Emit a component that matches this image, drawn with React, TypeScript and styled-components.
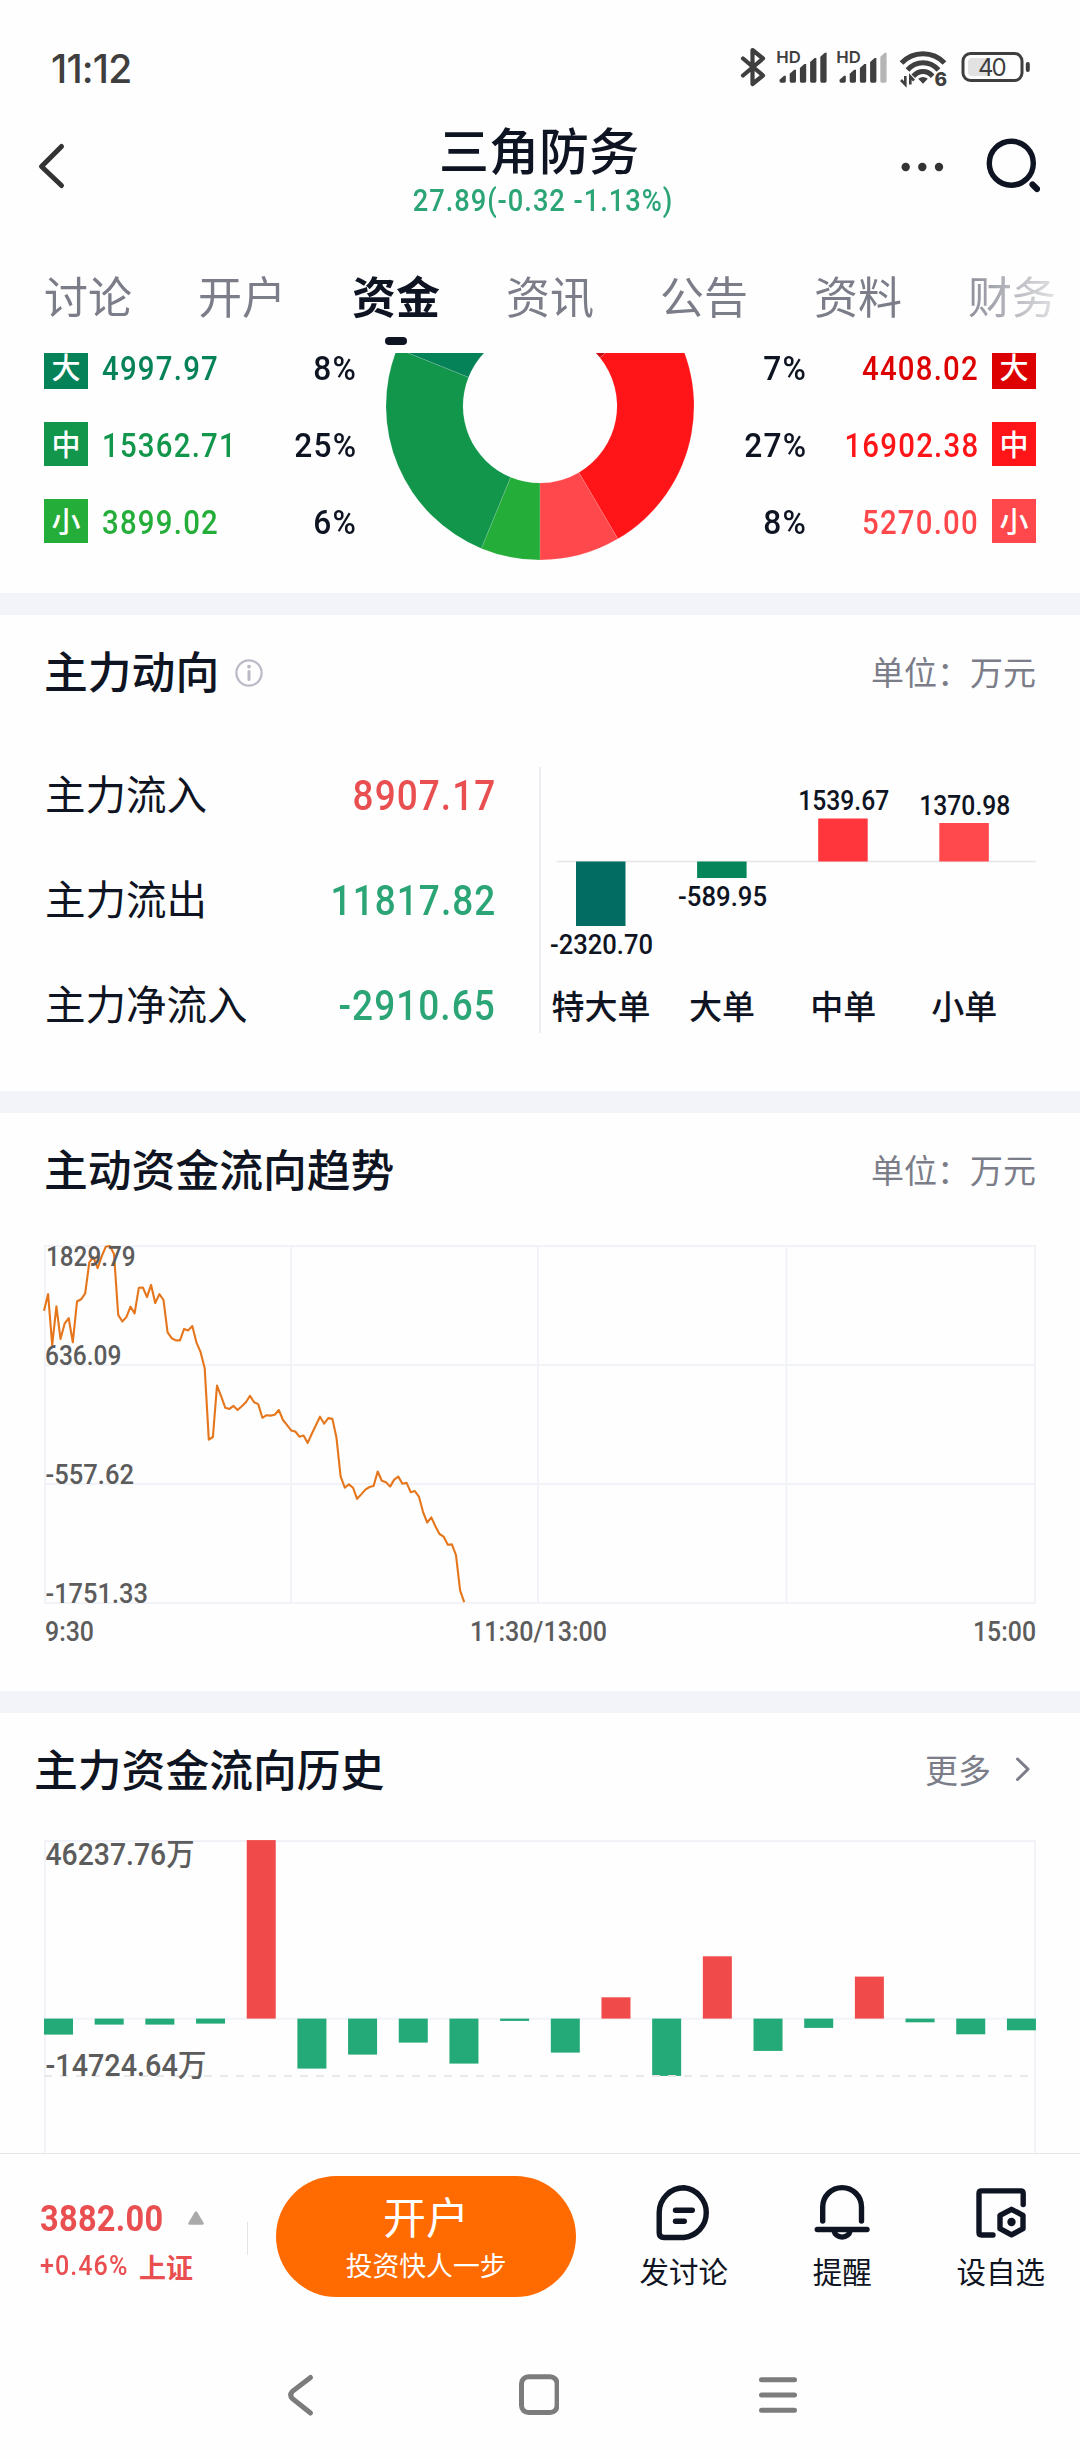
import React from "react";
import styled, { createGlobalStyle } from "styled-components";

const CJK = `"Noto Sans CJK SC", sans-serif`;
const DIN = `Roboto, "Noto Sans CJK SC", sans-serif`;
const INK = "#0f1423";
const MUTED = "#7b7d89";
const UP = "#e94f50";
const DOWN = "#2ba576";

const GlobalStyle = createGlobalStyle`
  * { box-sizing: border-box; }
  body { margin: 0; background: #fefefe; }
`;

const Screen = styled.div`
  width: 1080px;
  height: 2460px;
  overflow: hidden;
  display: flex;
  flex-direction: column;
  background: #fefefe;
  color: ${INK};
  font-family: ${CJK};
`;

/* Narrowed figures: squeezed glyphs with the tracking opened up again. */
const Num = styled.span<{
  $size: number;
  $track?: number;
  $color?: string;
  $weight?: number;
  $from?: "left" | "right" | "center";
  $squeeze?: number;
  $line?: number;
}>`
  display: inline-block;
  font-family: ${DIN};
  font-size: ${(p) => p.$size}px;
  font-weight: ${(p) => p.$weight ?? 500};
  letter-spacing: ${(p) => p.$track ?? 0}px;
  margin-right: ${(p) => -(p.$track ?? 0)}px;
  color: ${(p) => p.$color ?? "inherit"};
  line-height: ${(p) => p.$line ?? p.$size}px;
  white-space: nowrap;
  transform: scaleX(${(p) => p.$squeeze ?? 0.88});
  transform-origin: ${(p) => p.$from ?? "left"} center;
`;

/* ---------- status bar ---------- */

const StatusBar = styled.div`
  flex: none;
  height: 104px;
  display: flex;
  justify-content: space-between;
  padding: 45px 48px 0 51px;
  color: #3f3f3f;
`;

const Clock = styled.div`
  font-family: Inter, sans-serif;
  font-size: 39px;
  font-weight: 500;
  line-height: 47px;
  letter-spacing: -0.8px;
`;

const StatusIcons = () => (
  <svg width="292" height="44" viewBox="739 46 292 44" fill="none">
    <path d="M742 59.5 L762 76.5 L751.5 85 V51 L762 59.5 L742 76.5" stroke="#3f3f3f" strokeWidth="4.2" strokeLinejoin="round" strokeLinecap="round" />
    {[0, 60].map((dx) => (
      <g key={dx} fill="#3f3f3f" transform={`translate(${dx} 0)`}>
        <text x="775.3" y="64" fontFamily="Inter, sans-serif" fontSize="16.5" fontWeight="600" textLength="24.5" lengthAdjust="spacingAndGlyphs">HD</text>
        {[76.7, 70.7, 65, 59, 53.7].map((top, i) => (
          <path
            key={top}
            d={`M${778.5 + i * 10.2} 82 V${top + 4} L${783 + i * 10.2} ${top} H${784.8 + i * 10.2} V82 Q${784.8 + i * 10.2} 83.7 ${783.2 + i * 10.2} 83.7 H${780 + i * 10.2} Q${778.5 + i * 10.2} 83.7 ${778.5 + i * 10.2} 82 Z`}
            fill={dx && i === 4 ? "#b5b5b5" : "#3f3f3f"}
          />
        ))}
      </g>
    ))}
    <g stroke="#3f3f3f" strokeWidth="5">
      <path d="M900.5 64 C912 51.5 932 51.5 943.5 64" />
      <path d="M906.5 71 C915 61.3 929 61.3 937.5 71" />
      <path d="M912.3 77.2 C918 71 926 71 931.7 77.2" />
    </g>
    <path d="M922 84.8 L917.2 79.8 Q922 76.4 926.8 79.8 Z" fill="#3f3f3f" />
    <path d="M904.3 77 V85.5 L900 81 M909.3 85.5 V77.5 L913 81.5" stroke="#3f3f3f" strokeWidth="2.6" />
    <text x="933.6" y="86.6" fontFamily="Inter, sans-serif" fontSize="19" fontWeight="800" fill="#3f3f3f" stroke="#fefefe" strokeWidth="3" paintOrder="stroke">6</text>
    <rect x="962" y="54.5" width="59" height="27" rx="7.5" stroke="#3f3f3f" strokeWidth="3" />
    <rect x="967" y="59" width="21" height="18" rx="4" fill="#e2e2e2" />
    <rect x="1024.8" y="63" width="4" height="10" rx="2" fill="#3f3f3f" />
    <text x="991.3" y="76.8" textAnchor="middle" fontFamily="Inter, sans-serif" fontSize="24" fontWeight="400" fill="#3f3f3f" textLength="28.5">40</text>
  </svg>
);

/* ---------- header ---------- */

const Header = styled.header`
  flex: none;
  height: 132px;
  display: grid;
  grid-template-columns: 1fr auto 1fr;
  padding: 0 38px 0 36px;
`;

const HeaderSide = styled.div<{ $end?: boolean }>`
  display: flex;
  align-items: flex-start;
  justify-content: ${(p) => (p.$end ? "flex-end" : "flex-start")};
  padding-top: 30px;
  padding-right: ${(p) => (p.$end ? 2 : 0)}px;
`;

const Heading = styled.div`
  display: flex;
  flex-direction: column;
  align-items: center;
  padding-top: 14px;
`;

const StockName = styled.h1`
  margin: 0 0 7px;
  font-size: 50px;
  font-weight: 500;
  line-height: 60px;
`;

const HeaderQuote = styled.div`
  padding-left: 7px;
  height: 31px;
  display: flex;
`;

/* ---------- tabs ---------- */

const Tabs = styled.nav`
  flex: none;
  height: 117px;
  display: flex;
  gap: 66px;
  padding: 27px 0 0 44px;
  overflow: hidden;
  mask-image: linear-gradient(to right, #000 950px, transparent 1085px);
`;

const Tab = styled.div<{ $active?: boolean }>`
  flex: none;
  display: flex;
  flex-direction: column;
  align-items: center;
  gap: 9px;
  font-size: 44px;
  line-height: 65px;
  font-weight: ${(p) => (p.$active ? 700 : 400)};
  color: ${(p) => (p.$active ? INK : MUTED)};
`;

const TabMark = styled.i`
  width: 22px;
  height: 8px;
  border-radius: 4px;
  background: ${INK};
`;

/* ---------- order breakdown ---------- */

const Breakdown = styled.section`
  flex: none;
  height: 240px;
  display: grid;
  grid-template-columns: 312px 1fr 312px;
  column-gap: 30px;
  padding: 0 44px;
  overflow: hidden;
`;

const OrderList = styled.div`
  display: flex;
  flex-direction: column;
  gap: 33px;
  margin-top: -8px;
`;

const OrderRow = styled.div<{ $color: string; $flip?: boolean }>`
  height: 44px;
  display: flex;
  align-items: center;
  justify-content: space-between;
  flex-direction: ${(p) => (p.$flip ? "row-reverse" : "row")};
  color: ${(p) => p.$color};
`;

const OrderAmount = styled.div<{ $flip?: boolean }>`
  display: flex;
  align-items: center;
  gap: 14px;
  flex-direction: ${(p) => (p.$flip ? "row-reverse" : "row")};
`;

const OrderBadge = styled.span<{ $color: string }>`
  width: 44px;
  height: 44px;
  background: ${(p) => p.$color};
  color: #fff;
  font-size: 29px;
  font-weight: 500;
  line-height: 42px;
  text-align: center;
`;

const PercentSlot = styled.div`
  width: 82px;
  display: flex;
  justify-content: flex-end;
`;

const Figure = styled.div`
  display: flex;
  padding-top: 3px;
`;

const Donut = styled.div`
  display: flex;
  justify-content: center;
  margin: 0 -30px;
`;

/* ---------- sections ---------- */

const Band = styled.div`
  flex: none;
  height: 22px;
  background: #f3f4f9;
`;

const Section = styled.section<{ $height: number }>`
  flex: none;
  height: ${(p) => p.$height}px;
  overflow: hidden;
`;

const SectionHead = styled.div<{ $left?: number; $top: number }>`
  display: flex;
  justify-content: space-between;
  align-items: center;
  height: 66px;
  margin-top: ${(p) => p.$top}px;
  padding: 0 44px 0 ${(p) => p.$left ?? 44}px;
`;

const SectionTitle = styled.h2`
  margin: 0;
  display: flex;
  align-items: center;
  gap: 16px;
  font-size: 43.8px;
  font-weight: 500;
  line-height: 66px;
  svg { margin-top: 5px; }
`;

const Note = styled.div`
  display: flex;
  align-items: center;
  gap: 23px;
  padding-top: 2px;
  font-size: 33px;
  line-height: 50px;
  color: ${MUTED};
`;

const FlowBody = styled.div`
  display: grid;
  grid-template-columns: 495px 1fr;
  align-items: start;
  margin-top: 64px;
`;

const FlowList = styled.div`
  display: flex;
  flex-direction: column;
  margin-top: -2px;
  padding-left: 45px;
`;

const FlowRow = styled.div`
  height: 105px;
  display: flex;
  justify-content: space-between;
  align-items: flex-start;
  font-size: 40.5px;
  line-height: 56px;
`;

const FlowChart = styled.div`
  height: 266px;
  margin-left: 44px;
  border-left: 2px solid #ececf1;
`;

const ChartBox = styled.div<{ $top: number }>`
  margin: ${(p) => p.$top}px 44px 0;
  svg { display: block; overflow: visible; }
`;

/* ---------- bottom ---------- */

const ActionBar = styled.footer`
  flex: none;
  height: 187px;
  border-top: 1px solid #e4e5e9;
  display: flex;
  background: #fefefe;
`;

const IndexQuote = styled.div`
  width: 208px;
  margin-left: 40px;
  padding-top: 45px;
  display: flex;
  flex-direction: column;
  gap: 14px;
  color: ${UP};
`;

const IndexLine = styled.div<{ $height: number }>`
  display: grid;
  grid-template-columns: ${(p) => (p.$height > 32 ? 148 : 99)}px auto;
  justify-content: start;
  align-items: center;
  height: ${(p) => p.$height}px;
`;

const IndexName = styled.span`
  font-size: 27px;
  font-weight: 700;
  line-height: 30px;
`;

const Divider = styled.i`
  width: 1px;
  height: 33px;
  margin: 68px 28px 0 0;
  background: #e4e4e8;
`;

const OpenAccount = styled.button`
  width: 301px;
  height: 121px;
  margin-top: 22px;
  padding: 8px 0 0;
  border: 0;
  border-radius: 61px;
  background: #ff6b00;
  color: #fff;
  font-family: ${CJK};
  display: flex;
  flex-direction: column;
  align-items: center;
  font-size: 43px;
  line-height: 62px;
`;

const OpenHint = styled.small`
  font-size: 26.8px;
  line-height: 38px;
`;

const Actions = styled.div`
  flex: 1;
  display: grid;
  grid-template-columns: repeat(3, 158.5px);
  margin-left: 28.5px;
  padding-top: 28px;
`;

const Action = styled.div`
  display: flex;
  flex-direction: column;
  align-items: center;
  gap: 5px;
  font-size: 29.5px;
  line-height: 42px;
  svg { display: block; }
`;

const SystemNav = styled.div`
  flex: none;
  height: 120px;
  display: flex;
  padding: 31px 0 0 281px;
  gap: 198px;
`;

/* ---------- data ---------- */

const sellOrders = [
  { tag: "大", amount: "4997.97", share: "8%", color: "#068259" },
  { tag: "中", amount: "15362.71", share: "25%", color: "#11964b" },
  { tag: "小", amount: "3899.02", share: "6%", color: "#24ad38" },
];
const buyOrders = [
  { tag: "大", amount: "4408.02", share: "7%", color: "#dd0000" },
  { tag: "中", amount: "16902.38", share: "27%", color: "#ff1418" },
  { tag: "小", amount: "5270.00", share: "8%", color: "#ff484c" },
];

const flows = [
  { name: "主力流入", value: "8907.17", color: UP },
  { name: "主力流出", value: "11817.82", color: DOWN },
  { name: "主力净流入", value: "-2910.65", color: DOWN },
];

const orderBars = [
  { name: "特大单", label: "-2320.70", h: -64.5, w: 103, color: "#036c62" },
  { name: "大单", label: "-589.95", h: -16.5, w: 89, color: "#07855a" },
  { name: "中单", label: "1539.67", h: 43, w: 91, color: "#ff373c" },
  { name: "小单", label: "1370.98", h: 38.5, w: 91, color: "#ff494d" },
];

/* Minute-by-minute drop from the day's high, on a scale where the full plot height is 963. */
const minuteDrop = [
  175, 130, 268, 163, 251, 210, 195, 260, 150, 144, 128, 44, 30, 60, 28, 2, 0, 22, 186, 204, 192, 164, 182, 113, 112,
  138, 105, 154, 130, 146, 233, 249, 255, 255, 224, 228, 216, 260, 287, 330, 523, 516, 377, 406, 437, 440, 432, 443,
  433, 422, 405, 422, 427, 464, 457, 458, 456, 443, 470, 484, 498, 501, 515, 512, 532, 507, 484, 461, 480, 465, 467,
  518, 622, 653, 644, 653, 683, 671, 658, 651, 648, 609, 634, 638, 650, 631, 623, 642, 640, 665, 662, 677, 718, 747,
  733, 757, 778, 785, 807, 806, 835, 930, 962,
];

const history = [
  -16, -6, -6, -5, 178.5, -50, -36, -24, -45, -2.3, -34, 21.3, -57.3, 62.3, -32.3, -9.3, 42, -3.7, -15.7, -11.7,
];

/* ---------- charts ---------- */

/* Ring sector; angles in degrees, measured from the bottom, positive towards the left. */
const sector = (from: number, to: number) => {
  const pt = (deg: number, r: number) => {
    const a = (deg * Math.PI) / 180;
    return `${154 - r * Math.sin(a)} ${53 + r * Math.cos(a)}`;
  };
  return `M${pt(from, 154)} A154 154 0 0 1 ${pt(to, 154)} L${pt(to, 77)} A77 77 0 0 0 ${pt(from, 77)} Z`;
};

const DonutChart = () => (
  <svg width="308" height="240" viewBox="0 0 308 240">
    <g stroke="#fff" strokeOpacity="0.25" strokeWidth="0.5">
      <path d={sector(0, 22.4)} fill="#24ad38" />
      <path d={sector(22.4, 111.9)} fill="#11964b" />
      <path d={sector(111.9, 150)} fill="#068259" />
      <path d={sector(-30.4, 0)} fill="#ff484c" />
      <path d={sector(-129, -30.4)} fill="#ff1418" />
      <path d={sector(-150, -129)} fill="#c80d12" />
    </g>
  </svg>
);

const OrderBarSvg = styled.svg`
  display: block;
  overflow: visible;
`;

const OrderBarChart = () => (
  <OrderBarSvg width="495" height="266" viewBox="541 767 495 266">
    <path d="M556.5 861.5 H1036" stroke="#e6e6ea" strokeWidth="1.4" />
    {orderBars.map((b, i) => {
      const x = 576 + i * 121.1;
      const cx = x + 25.5;
      return (
        <g key={b.name} fontSize="28" fill={INK} textAnchor="middle">
          <rect x={x} y={b.h > 0 ? 861.5 - b.h : 861.5} width="49.5" height={Math.abs(b.h)} fill={b.color} />
          <text
            x={cx}
            y={b.h > 0 ? 861.5 - b.h - 8.5 : 861.5 - b.h + 28}
            fontFamily={DIN}
            fontWeight="500"
            textLength={b.w}
            lengthAdjust="spacingAndGlyphs"
          >
            {b.label}
          </text>
          <text x={cx - 0.5} y="1019" fontFamily={CJK} fontSize="33" fontWeight="500">
            {b.name}
          </text>
        </g>
      );
    })}
  </OrderBarSvg>
);

const AxisText = ({ x, y, w, anchor, size = 27.6, children }: any) => (
  <text x={x} y={y} textAnchor={anchor} fontFamily={DIN} fontSize={size} fontWeight="500" fill="#5c5c5c" textLength={w} lengthAdjust="spacingAndGlyphs">
    {children}
  </text>
);

const TrendChart = () => (
  <svg width="992" height="400" viewBox="44 1245 992 400">
    <g stroke="#f1f3f9" strokeWidth="2">
      {[45, 291, 538, 786.5, 1035].map((x) => (
        <path key={x} d={`M${x} 1245 V1604`} />
      ))}
      {[0, 1, 2, 3].map((i) => (
        <path key={i} d={`M44 ${1246 + i * 119} H1036`} />
      ))}
    </g>
    <polyline
      fill="none"
      stroke="#e5761c"
      strokeWidth="2.1"
      strokeLinejoin="round"
      points={minuteDrop.map((d, i) => `${(44 + i * 4.12).toFixed(1)},${(1246 + (d / 963) * 356.5).toFixed(1)}`).join(" ")}
    />
    <AxisText x="46" y="1266" w="89.5">1829.79</AxisText>
    <AxisText x="45" y="1365" w="76.5">636.09</AxisText>
    <AxisText x="45.5" y="1484" w="88.5">-557.62</AxisText>
    <AxisText x="45.5" y="1603" w="102.5">-1751.33</AxisText>
    <AxisText x="45" y="1641" w="49">9:30</AxisText>
    <AxisText x="538.5" y="1641" w="137" anchor="middle">11:30/13:00</AxisText>
    <AxisText x="1036" y="1641" w="63" anchor="end">15:00</AxisText>
  </svg>
);

const HistoryChart = () => (
  <svg width="992" height="313" viewBox="44 1840 992 313">
    <g stroke="#f1f3f9" strokeWidth="2" fill="none">
      <path d="M45 2153 V1841 H1035 V2153" />
      <path d="M44 2018.7 H1036" />
    </g>
    {history.map((h, i) => (
      <rect
        key={i}
        x={44 + i * 50.68}
        y={h > 0 ? 2018.6 - h : 2018.6}
        width="29"
        height={Math.abs(h)}
        fill={h > 0 ? "#f04a4a" : "#24a978"}
      />
    ))}
    <path d="M44 2076 H1030" stroke="#e8e8e8" strokeWidth="2" strokeDasharray="8 8" />
    <AxisText x="45.5" y="1865" w="149" size="30.5">46237.76万</AxisText>
    <AxisText x="45.5" y="2076" w="161" size="30.5">-14724.64万</AxisText>
  </svg>
);

const iconStroke = { fill: "none", stroke: INK, strokeWidth: 5.4, strokeLinecap: "round", strokeLinejoin: "round" } as const;

const orders = (list: typeof sellOrders, flip?: boolean) =>
  list.map((o) => (
    <OrderRow key={o.tag} $color={o.color} $flip={flip}>
      <OrderAmount $flip={flip}>
        <OrderBadge $color={o.color}>{o.tag}</OrderBadge>
        <Figure>
          <Num $size={33.4} $line={40} $track={1.4} $from={flip ? "right" : "left"}>{o.amount}</Num>
        </Figure>
      </OrderAmount>
      <PercentSlot>
        <Figure>
          <Num $size={33.4} $line={40} $track={1.2} $squeeze={0.95} $from="right" $color={INK}>{o.share}</Num>
        </Figure>
      </PercentSlot>
    </OrderRow>
  ));

export default function App() {
  return (
    <Screen>
      <GlobalStyle />
      <StatusBar>
        <Clock>11:12</Clock>
        <StatusIcons />
      </StatusBar>

      <Header>
        <HeaderSide>
          <svg width="32" height="64" viewBox="36 134 32 64">
            <path d="M61.5 146.5 L41.5 166.5 L61.5 185.5" fill="none" stroke="#333" strokeWidth="5" strokeLinecap="round" strokeLinejoin="round" />
          </svg>
        </HeaderSide>
        <Heading>
          <StockName>三角防务</StockName>
          <HeaderQuote>
            <Num $size={31} $track={1.1} $from="center" $color={DOWN}>27.89(-0.32 -1.13%)</Num>
          </HeaderQuote>
        </Heading>
        <HeaderSide $end>
          <svg width="142" height="64" viewBox="898 134 142 64">
            <g fill="#333">
              <circle cx="905.7" cy="167" r="4.2" />
              <circle cx="922.3" cy="167" r="4.2" />
              <circle cx="939" cy="167" r="4.2" />
            </g>
            <circle cx="1011.3" cy="163.2" r="22" fill="none" stroke={INK} strokeWidth="5.4" />
            <path d="M1032.5 184.5 L1037 189" stroke={INK} strokeWidth="6.2" strokeLinecap="round" />
          </svg>
        </HeaderSide>
      </Header>

      <Tabs>
        {["讨论", "开户", "资金", "资讯", "公告", "资料", "财务"].map((t) => (
          <Tab key={t} $active={t === "资金"}>
            {t}
            {t === "资金" && <TabMark />}
          </Tab>
        ))}
      </Tabs>

      <Breakdown>
        <OrderList>{orders(sellOrders)}</OrderList>
        <Donut>
          <DonutChart />
        </Donut>
        <OrderList>{orders(buyOrders, true)}</OrderList>
      </Breakdown>

      <Band />
      <Section $height={476}>
        <SectionHead $top={22}>
          <SectionTitle>
            主力动向
            <svg width="28" height="28" viewBox="0 0 28 28" fill="none" stroke="#b9bac6">
              <circle cx="14" cy="14" r="12.6" strokeWidth="2.2" />
              <path d="M14 12.4 V20.6" strokeWidth="3" strokeLinecap="round" />
              <circle cx="14" cy="7.6" r="1.9" fill="#b9bac6" stroke="none" />
            </svg>
          </SectionTitle>
          <Note>单位：万元</Note>
        </SectionHead>
        <FlowBody>
          <FlowList>
            {flows.map((f) => (
              <FlowRow key={f.name}>
                {f.name}
                <Num $size={42} $track={1.2} $line={62} $from="right" $color={f.color}>{f.value}</Num>
              </FlowRow>
            ))}
          </FlowList>
          <FlowChart>
            <OrderBarChart />
          </FlowChart>
        </FlowBody>
      </Section>

      <Band />
      <Section $height={578}>
        <SectionHead $top={22}>
          <SectionTitle>主动资金流向趋势</SectionTitle>
          <Note>单位：万元</Note>
        </SectionHead>
        <ChartBox $top={44}>
          <TrendChart />
        </ChartBox>
      </Section>

      <Band />
      <Section $height={440}>
        <SectionHead $top={22} $left={34}>
          <SectionTitle>主力资金流向历史</SectionTitle>
          <Note>
            更多
            <svg width="22" height="28" viewBox="0 0 22 28">
              <path d="M3.5 4 L14 14.2 L3.5 24.5" fill="none" stroke={MUTED} strokeWidth="3" strokeLinecap="round" strokeLinejoin="round" />
            </svg>
          </Note>
        </SectionHead>
        <ChartBox $top={39}>
          <HistoryChart />
        </ChartBox>
      </Section>

      <ActionBar>
        <IndexQuote>
          <IndexLine $height={38}>
            <Num $size={37} $track={0.3} $weight={700}>3882.00</Num>
            <svg width="16" height="14" viewBox="0 0 16 14">
              <path d="M8 1.5 L14.5 12.5 H1.5 Z" fill="#aaa" stroke="#aaa" strokeWidth="2.5" strokeLinejoin="round" />
            </svg>
          </IndexLine>
          <IndexLine $height={31}>
            <Num $size={28.5} $track={1.2}>+0.46%</Num>
            <IndexName>上证</IndexName>
          </IndexLine>
        </IndexQuote>
        <Divider />
        <OpenAccount>
          开户
          <OpenHint>投资快人一步</OpenHint>
        </OpenAccount>
        <Actions>
          <Action>
            <svg width="62" height="62" viewBox="653 2182 62 62">
              <path d="M684 2187.8 A25 25 0 0 1 684 2237.5 H664 Q659.2 2237.5 659.2 2232.7 V2212.6 A24.8 24.8 0 0 1 684 2187.8 Z" {...iconStroke} />
              <path d="M675.5 2210.3 H692.3 M675.5 2221.3 H684.3" {...iconStroke} />
            </svg>
            发讨论
          </Action>
          <Action>
            <svg width="62" height="62" viewBox="812 2182 62 62">
              <path d="M823.7 2221 V2207 A19.4 19.4 0 0 1 862.5 2207 V2221" {...iconStroke} />
              <path d="M818.3 2229.5 H868" {...iconStroke} />
              <path d="M835 2230.5 A8.2 7.8 0 0 0 851.2 2230.5" {...iconStroke} />
            </svg>
            提醒
          </Action>
          <Action>
            <svg width="62" height="62" viewBox="970 2182 62 62">
              <path d="M993 2235 H981.5 Q979 2235 979 2232.5 V2193.4 Q979 2190.9 981.5 2190.9 H1020.7 Q1023.2 2190.9 1023.2 2193.4 V2204.5" {...iconStroke} />
              <path d="M1011.5 2209.3 L1023 2215.3 V2228.7 L1011.5 2234.8 L1000 2228.7 V2215.3 Z" {...iconStroke} />
              <circle cx="1011.5" cy="2222" r="4.2" fill={INK} />
            </svg>
            设自选
          </Action>
        </Actions>
      </ActionBar>

      <SystemNav>
        {[
          <path key="back" d="M29.5 6.5 L11.2 20.6 Q8.2 24 11.2 27.4 L29.5 42" />,
          <rect key="home" x="2.5" y="5.8" width="35.6" height="35.8" rx="7" />,
          <path key="menu" d="M4.5 8.7 H37.5 M4.5 24 H37.5 M4.5 39.3 H37.5" />,
        ].map((shape, i) => (
          <svg key={i} width="40" height="48" viewBox="0 0 40 48" fill="none" stroke="#7c7c7c" strokeWidth="5" strokeLinecap="round">
            {shape}
          </svg>
        ))}
      </SystemNav>
    </Screen>
  );
}
